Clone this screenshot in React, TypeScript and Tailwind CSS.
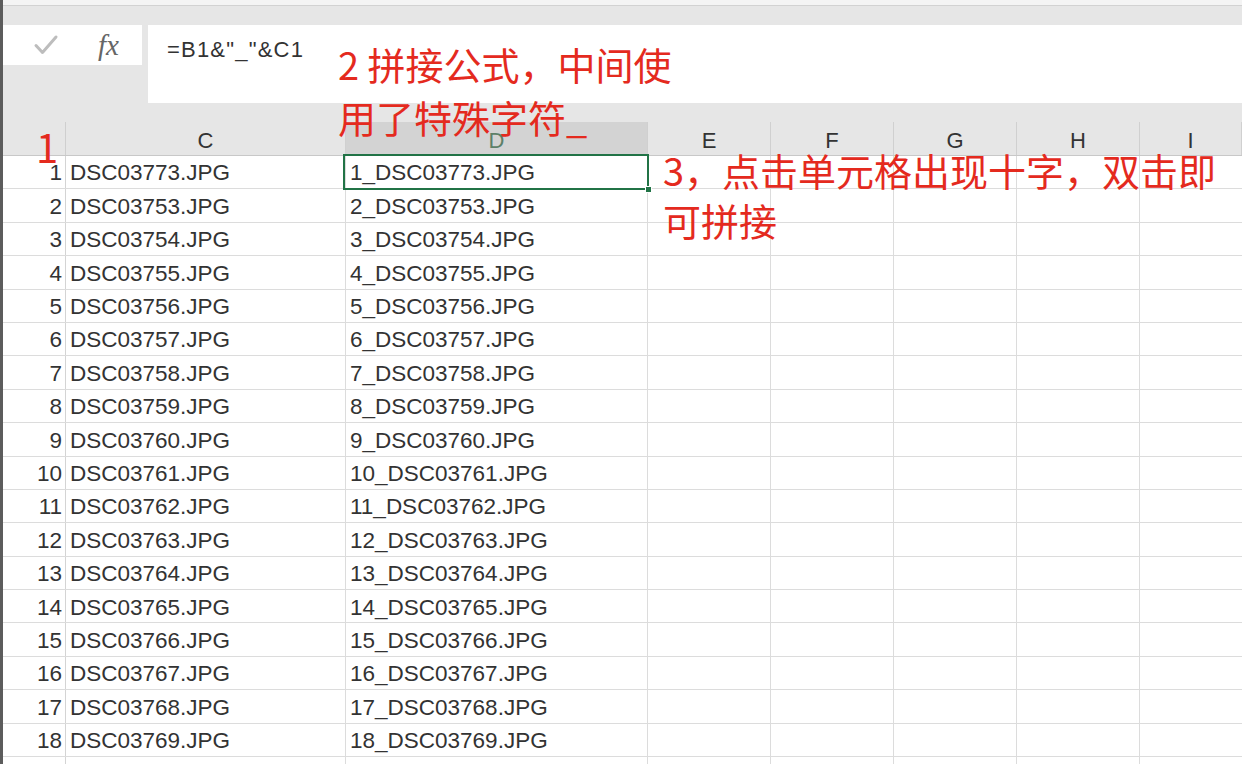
import React from 'react';

const rows: string[] = [
  'DSC03773', 'DSC03753', 'DSC03754', 'DSC03755', 'DSC03756', 'DSC03757', 'DSC03758',
  'DSC03759', 'DSC03760', 'DSC03761', 'DSC03762', 'DSC03763', 'DSC03764', 'DSC03765',
  'DSC03766', 'DSC03767', 'DSC03768', 'DSC03769', 'DSC03770',
];

const cols = [
  { name: 'C', w: 'w-[280px]' },
  { name: 'D', w: 'w-[302px]' },
  { name: 'E', w: 'w-[123px]' },
  { name: 'F', w: 'w-[123px]' },
  { name: 'G', w: 'w-[123px]' },
  { name: 'H', w: 'w-[123px]' },
  { name: 'I', w: 'flex-1' },
];

const FormulaBar: React.FC = () => (
  <div className="bg-[#e6e6e6] shrink-0">
    <div className="h-[6px] bg-[#f4f4f4] border-b border-[#d2d2d2]" />
    <div className="flex items-start gap-[6px] pt-[19px] pb-[19px]">
      <div className="w-[139px] h-[40px] bg-white flex items-center">
        <svg className="ml-[30px]" width="26" height="22" viewBox="0 0 26 22" fill="none">
          <path d="M3 11.5l6.5 7L23 3" stroke="#bdbdbd" strokeWidth="3" strokeLinecap="round" strokeLinejoin="round" />
        </svg>
        <span className="ml-[39px] text-[29px] italic text-[#666] leading-none" style={{ fontFamily: '"Liberation Serif", serif' }}>
          fx
        </span>
      </div>
      <div className="flex-1 h-[78px] bg-white pl-[19px] pt-[8px]">
        <span className="text-[22px] text-[#333] tracking-[1.2px]" style={{ fontFamily: '"Liberation Sans", sans-serif' }}>
          =B1&amp;"_"&amp;C1
        </span>
      </div>
    </div>
  </div>
);

const HeaderRow: React.FC = () => (
  <div className="flex shrink-0 h-[34px] bg-[#e6e6e6] border-b border-[#c8c8c8]">
    <div className="w-[63px] border-r border-[#cfcfcf]" />
    {cols.map(c => (
      <div
        key={c.name}
        className={`${c.w} flex items-center justify-center pt-[3px] text-[22px] border-r border-[#d0d0d0] ${
          c.name === 'D' ? 'bg-[#d3d3d3] text-[#5d8068]' : 'text-[#333]'
        }`}
      >
        {c.name}
      </div>
    ))}
  </div>
);

const Row: React.FC<{ n: number; file: string }> = ({ n, file }) => (
  <div className="flex shrink-0 h-[33.4px] border-b border-[#dcdcdc] text-[22.5px] text-[#333] leading-none">
    <div className="w-[63px] flex items-center justify-end pr-[3px] pt-[3px] border-r border-[#d4d4d4]">{n}</div>
    <div className="w-[280px] flex items-center pl-[4px] pt-[3px] border-r border-[#dcdcdc]">{file}.JPG</div>
    <div className="w-[302px] flex items-center pl-[4px] pt-[3px] border-r border-[#dcdcdc]">{n}_{file}.JPG</div>
    <div className="w-[123px] border-r border-[#dcdcdc]" />
    <div className="w-[123px] border-r border-[#dcdcdc]" />
    <div className="w-[123px] border-r border-[#dcdcdc]" />
    <div className="w-[123px] border-r border-[#dcdcdc]" />
    <div className="flex-1" />
  </div>
);

export default function App() {
  const cjk = { fontFamily: '"Noto Sans CJK SC", "Noto Sans", sans-serif' };
  return (
    <div
      className="relative w-[1242px] h-[764px] overflow-hidden bg-white flex"
      style={{ fontFamily: '"Liberation Sans", Arial, sans-serif' }}
    >
      <div className="w-[3px] bg-[#5c5c5c] shrink-0" />
      <div className="flex-1 flex flex-col">
        <FormulaBar />
        <HeaderRow />
        {rows.map((f, i) => (
          <Row key={f} n={i + 1} file={f} />
        ))}
      </div>

      {/* selected cell D1 */}
      <div className="absolute left-[343px] top-[154px] w-[306px] h-[36px] border-2 border-[#217346]">
        <div className="absolute -right-[5px] -bottom-[5px] w-[7px] h-[7px] bg-[#217346] border border-white" />
      </div>

      {/* red annotations */}
      <div className="absolute left-[36px] top-[126px] text-[40px] leading-[40px] text-[#e42a1e]" style={cjk}>
        1
      </div>
      <div className="absolute left-[338px] top-[37px] text-[38px] leading-[53px] text-[#e42a1e] whitespace-nowrap" style={cjk}>
        <div>2 拼接公式，中间使</div>
        <div>用了特殊字符_</div>
      </div>
      <div className="absolute left-[663px] top-[145px] text-[38px] leading-[50px] text-[#e42a1e] whitespace-nowrap" style={cjk}>
        <div>3，点击单元格出现十字，双击即</div>
        <div>可拼接</div>
      </div>
    </div>
  );
}
